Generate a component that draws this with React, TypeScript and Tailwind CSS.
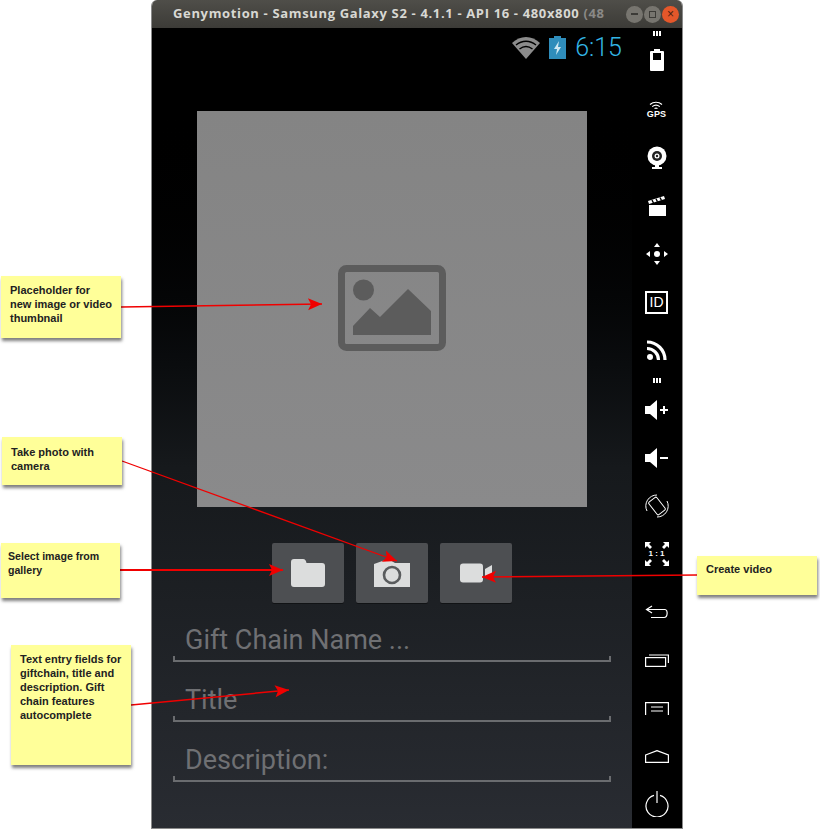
import type { ReactNode } from 'react';

function Note({ className, children }: { className: string; children: ReactNode }) {
  return (
    <div
      className={`absolute bg-[#ffff99] shadow-[1px_3px_3px_rgba(0,0,0,0.5)] font-['Liberation_Sans',sans-serif] font-bold leading-[14px] text-[#222] ${className}`}
    >
      {children}
    </div>
  );
}

function Arrows() {
  const lines = [
    [121, 307, 322, 304, 1.3],
    [122, 461, 397, 561, 1.3],
    [120, 570, 283, 570, 2],
    [131, 705, 289, 690, 1.5],
    [697, 575, 482, 577, 1.5],
  ];
  return (
    <svg className="absolute left-0 top-0" width="820" height="832">
      {lines.map(([x1, y1, x2, y2, w]) => {
        const a = Math.atan2(y2 - y1, x2 - x1);
        const bx = x2 - Math.cos(a) * 14;
        const by = y2 - Math.sin(a) * 14;
        const nx = -Math.sin(a) * 6;
        const ny = Math.cos(a) * 6;
        return (
          <g key={x1}>
            <line x1={x1} y1={y1} x2={x2} y2={y2} stroke="#f00000" strokeWidth={w} />
            <polygon
              points={`${x2},${y2} ${bx + nx},${by + ny} ${bx + Math.cos(a) * 3},${by + Math.sin(a) * 3} ${bx - nx},${by - ny}`}
              fill="#f00000"
            />
          </g>
        );
      })}
    </svg>
  );
}

function Dots() {
  return (
    <div className="flex gap-px">
      <span className="w-[2px] h-[5px] bg-white" />
      <span className="w-[2px] h-[5px] bg-white" />
      <span className="w-[2px] h-[5px] bg-white" />
    </div>
  );
}

function Tool({ children, h = 'h-12' }: { children: ReactNode; h?: string }) {
  return <div className={`${h} flex items-center justify-center shrink-0`}>{children}</div>;
}

function Sidebar() {
  return (
    <div className="w-[50px] bg-black flex flex-col items-stretch pt-[3px] pr-px text-white">
      <Tool h="h-[5px]"><Dots /></Tool>
      <Tool>
        <svg width="14" height="22" viewBox="0 0 14 22">
          <path d="M4 0h6v2h3a1 1 0 0 1 1 1v18a1 1 0 0 1-1 1H1a1 1 0 0 1-1-1V3a1 1 0 0 1 1-1h3z" fill="#fff" />
          <rect x="3" y="4" width="8" height="7" fill="#000" />
        </svg>
      </Tool>
      <div className="h-[2px]" />
      <Tool>
        <div className="flex flex-col items-center">
          <svg width="14" height="9" viewBox="0 0 14 9" fill="none" stroke="#fff" strokeWidth="1.2">
            <path d="M1 3.5C4.5 0.5 9.5 0.5 13 3.5" />
            <path d="M3.2 5.6C5.4 3.8 8.6 3.8 10.8 5.6" />
            <path d="M5.5 7.6C6.4 7 7.6 7 8.5 7.6" />
          </svg>
          <span className="font-['Liberation_Sans',sans-serif] font-bold text-[9px] leading-[9px] tracking-[0.2px]">GPS</span>
        </div>
      </Tool>
      <Tool>
        <svg width="20" height="24" viewBox="0 0 20 24">
          <circle cx="10" cy="10" r="9.5" fill="#fff" />
          <circle cx="10" cy="10" r="5" fill="#222" />
          <circle cx="10" cy="10" r="2.5" fill="#fff" />
          <circle cx="10" cy="10" r="1.2" fill="#222" />
          <path d="M8 19h4v2h3v2H5v-2h3z" fill="#fff" />
        </svg>
      </Tool>
      <Tool>
        <svg width="18" height="22" viewBox="0 0 18 22">
          <path d="M1 10h17v11H1z" fill="#fff" />
          <path d="M0 6l16-5 1 3L1 9z" fill="#fff" />
          <path d="M4 5l1.5 3M8 3.7l1.5 3M12 2.5l1.5 3" stroke="#000" strokeWidth="1.4" />
        </svg>
      </Tool>
      <Tool>
        <svg width="24" height="24" viewBox="0 0 24 24" fill="#fff">
          <circle cx="12" cy="12" r="3" />
          <path d="M12 1l3 4H9zM12 23l-3-4h6zM1 12l4-3v6zM23 12l-4 3V9z" />
        </svg>
      </Tool>
      <Tool>
        <div className="w-[23px] h-[23px] border-2 border-white flex items-center justify-center font-['Liberation_Sans',sans-serif] text-[14px] leading-none">
          ID
        </div>
      </Tool>
      <Tool>
        <svg width="20" height="20" viewBox="0 0 20 20" fill="none" stroke="#fff" strokeWidth="3.2">
          <path d="M0 2C10 2 18 10 18 20" />
          <path d="M0 8.5C6.5 8.5 11.5 13.5 11.5 20" />
          <circle cx="3" cy="17" r="1.4" fill="#fff" />
        </svg>
      </Tool>
      <Tool h="h-3"><Dots /></Tool>
      <Tool>
        <svg width="24" height="20" viewBox="0 0 24 20" fill="#fff">
          <path d="M0 6h5l7-6v20l-7-6H0z" />
          <path d="M15 9h3V6h2v3h3v2h-3v3h-2v-3h-3z" />
        </svg>
      </Tool>
      <Tool>
        <svg width="24" height="20" viewBox="0 0 24 20" fill="#fff">
          <path d="M0 6h5l7-6v20l-7-6H0z" />
          <path d="M15 9h8v2h-8z" />
        </svg>
      </Tool>
      <Tool>
        <svg width="24" height="24" viewBox="0 0 24 24" fill="none" stroke="#fff">
          <rect x="7" y="4" width="10" height="16" rx="1.5" transform="rotate(-38 12 12)" />
          <path d="M2 17A11 11 0 0 1 12 1M22 7A11 11 0 0 1 12 23" strokeWidth="1" />
        </svg>
      </Tool>
      <Tool>
        <div className="relative w-6 h-6 flex items-center justify-center">
          <svg className="absolute inset-0" width="24" height="24" viewBox="0 0 24 24" fill="#fff">
            <path d="M0 0h6l-2 2 3 3-2 2-3-3-2 2zM24 0v6l-2-2-3 3-2-2 3-3-2-2zM0 24v-6l2 2 3-3 2 2-3 3 2 2zM24 24h-6l2-2-3-3 2-2 3 3 2-2z" />
          </svg>
          <span className="font-['Liberation_Sans',sans-serif] font-bold text-[8px] leading-none">1 : 1</span>
        </div>
      </Tool>
      <div className="h-[10px]" />
      <Tool>
        <svg width="24" height="14" viewBox="0 0 24 14" fill="none" stroke="#fff" strokeWidth="1.2">
          <path d="M7 1L1.5 4.5 7 8" />
          <path d="M2 4.5h18c3 0 3 8-1 8H6" />
        </svg>
      </Tool>
      <Tool>
        <svg width="24" height="13" viewBox="0 0 24 13" fill="none" stroke="#fff" strokeWidth="1.2">
          <rect x="0.6" y="3.6" width="20" height="8.8" />
          <path d="M4 1h19.4v8" />
        </svg>
      </Tool>
      <Tool>
        <svg width="24" height="13" viewBox="0 0 24 13" fill="none" stroke="#fff" strokeWidth="1.2">
          <path d="M0.6 13V0.6h22.8V13" />
          <path d="M6 5h12M6 9h12" />
        </svg>
      </Tool>
      <Tool>
        <svg width="24" height="13" viewBox="0 0 24 13" fill="none" stroke="#fff" strokeWidth="1.2">
          <path d="M0.6 5L12 0.6 23.4 5v7.4H0.6z" />
        </svg>
      </Tool>
      <Tool>
        <svg width="24" height="26" viewBox="0 0 24 26" fill="none" stroke="#fff" strokeWidth="1.2">
          <path d="M9 4.42A11 11 0 1 0 15 4.42" />
          <path d="M12 0v12" />
        </svg>
      </Tool>
    </div>
  );
}

function ActionButton({ children }: { children: ReactNode }) {
  return (
    <div className="w-[72px] h-[60px] rounded-[2px] bg-[#4d4f52] shadow-[0_1px_0_rgba(0,0,0,0.4)] flex items-center justify-center">
      {children}
    </div>
  );
}

function Field({ label }: { label: string }) {
  return (
    <div className="h-[60px] relative flex items-end">
      <div className="w-full h-[6px] border-x-2 border-b-2 border-[#6a6c6f]" />
      <span className="absolute left-[12px] bottom-[2px] font-['Roboto',sans-serif] text-[27px] leading-[40px] text-[#6f7073]">
        {label}
      </span>
    </div>
  );
}

function Screen() {
  return (
    <div className="w-[480px] bg-gradient-to-b from-black from-[8%] via-[#16191c] via-[55%] to-[#292c32] flex flex-col">
      <div className="h-[39px] flex items-center justify-end pr-[10px]">
        <svg width="28" height="22" viewBox="0 0 28 22">
          <path d="M14 22L0 6C8-2 20-2 28 6z" fill="#8c8c8c" />
          <path d="M4 8C10 3 18 3 24 8M7.5 12C11.5 9 16.5 9 20.5 12" stroke="#000" strokeWidth="1.5" fill="none" />
        </svg>
        <svg width="17" height="23" viewBox="0 0 17 23" className="ml-[9px]">
          <path d="M5 0h7v2h5v21H0V2h5z" fill="#2f8dbb" />
          <path d="M10 5L5 13h3l-1 6 5-8H9z" fill="#cfe8f2" />
        </svg>
        <span className="font-['Roboto',sans-serif] font-light text-[25px] leading-none text-[#33b5e5] ml-[9px]">6:15</span>
      </div>
      <div className="mt-[44px] ml-[45px] w-[390px] h-[396px] bg-gradient-to-b from-[#848484] to-[#8a8a8b] flex items-center justify-center">
        <svg width="108" height="86" viewBox="0 0 108 86" className="mt-[-2px]">
          <rect x="3.5" y="3.5" width="101" height="79" rx="5" fill="none" stroke="#5c5c5c" strokeWidth="7" />
          <circle cx="25.5" cy="25" r="10.5" fill="#5c5c5c" />
          <path d="M15 70V61L32 43l10 9 28-28 23 22v24z" fill="#5c5c5c" />
        </svg>
      </div>
      <div className="mt-[36px] ml-[120px] flex gap-3">
        <ActionButton>
          <svg width="34" height="28" viewBox="0 0 34 28" fill="#dcdddd">
            <path d="M3 0h9c2 0 3 1.5 3.5 4H31a3 3 0 0 1 3 3v18a3 3 0 0 1-3 3H3a3 3 0 0 1-3-3V3a3 3 0 0 1 3-3z" />
          </svg>
        </ActionButton>
        <ActionButton>
          <svg width="36" height="28" viewBox="0 0 36 28">
            <path d="M0 5l14-5 7 4h15v24H0z" fill="#dcdddd" />
            <circle cx="18" cy="16" r="8" fill="none" stroke="#5a5c5e" strokeWidth="2.6" />
          </svg>
        </ActionButton>
        <ActionButton>
          <svg width="32" height="20" viewBox="0 0 32 20" fill="#dcdddd">
            <rect width="23" height="19" y="0.5" rx="3" />
            <path d="M25 6l7-4v15l-7-3z" />
          </svg>
        </ActionButton>
      </div>
      <div className="mt-[-1px] ml-[21px] w-[438px] flex flex-col">
        <Field label="Gift Chain Name ..." />
        <Field label="Title" />
        <Field label="Description:" />
      </div>
    </div>
  );
}

export default function App() {
  return (
    <div className="relative w-[820px] h-[832px] bg-white overflow-hidden">
      <div className="ml-[152px] w-[530px] h-[828px] flex flex-col rounded-t-[6px] overflow-hidden border-x border-b border-[#8a8a8a] box-content -translate-x-px">
        <div className="h-[28px] bg-gradient-to-b from-[#4f4e49] to-[#3c3b37] flex items-center pl-[21px] pr-[3px] shrink-0">
          <span className="font-['Open_Sans',sans-serif] font-bold text-[13px] tracking-[0.65px] text-[#d8d8d3] whitespace-nowrap">
            Genymotion - Samsung Galaxy S2 - 4.1.1 - API 16 - 480x800 <span className="text-[#8a8986]">(48</span>
          </span>
          <div className="ml-auto flex gap-px">
            <span className="w-[17px] h-[17px] rounded-full bg-[#77756f] flex items-center justify-center">
              <span className="w-[7px] h-[2px] bg-[#3c3b37]" />
            </span>
            <span className="w-[17px] h-[17px] rounded-full bg-[#77756f] flex items-center justify-center">
              <span className="w-[7px] h-[7px] border border-[#3c3b37]" />
            </span>
            <span className="w-[17px] h-[17px] rounded-full bg-[#e4572a] flex items-center justify-center font-['Liberation_Sans',sans-serif] text-[12px] leading-none text-[#4a2010]">
              ×
            </span>
          </div>
        </div>
        <div className="flex-1 flex min-h-0">
          <Screen />
          <Sidebar />
        </div>
      </div>

      <Arrows />

      <Note className="left-[1px] top-[276px] w-[120px] h-[62px] pl-[9px] pt-[7px] text-[11px]">
        Placeholder for<br />new image or video<br />thumbnail
      </Note>
      <Note className="left-[2px] top-[437px] w-[120px] h-[48px] pl-[9px] pt-[8px] text-[11px]">
        Take photo with<br />camera
      </Note>
      <Note className="left-[1px] top-[543px] w-[119px] h-[55px] pl-[7px] pt-[6px] text-[10.6px]">
        Select image from<br />gallery
      </Note>
      <Note className="left-[11px] top-[645px] w-[120px] h-[120px] pl-[9px] pt-[7px] text-[11px]">
        Text entry fields for<br />giftchain, title and<br />description. Gift<br />chain features<br />autocomplete
      </Note>
      <Note className="left-[697px] top-[556px] w-[120px] h-[39px] pl-[9px] pt-[6px] text-[11px]">
        Create video
      </Note>
    </div>
  );
}
